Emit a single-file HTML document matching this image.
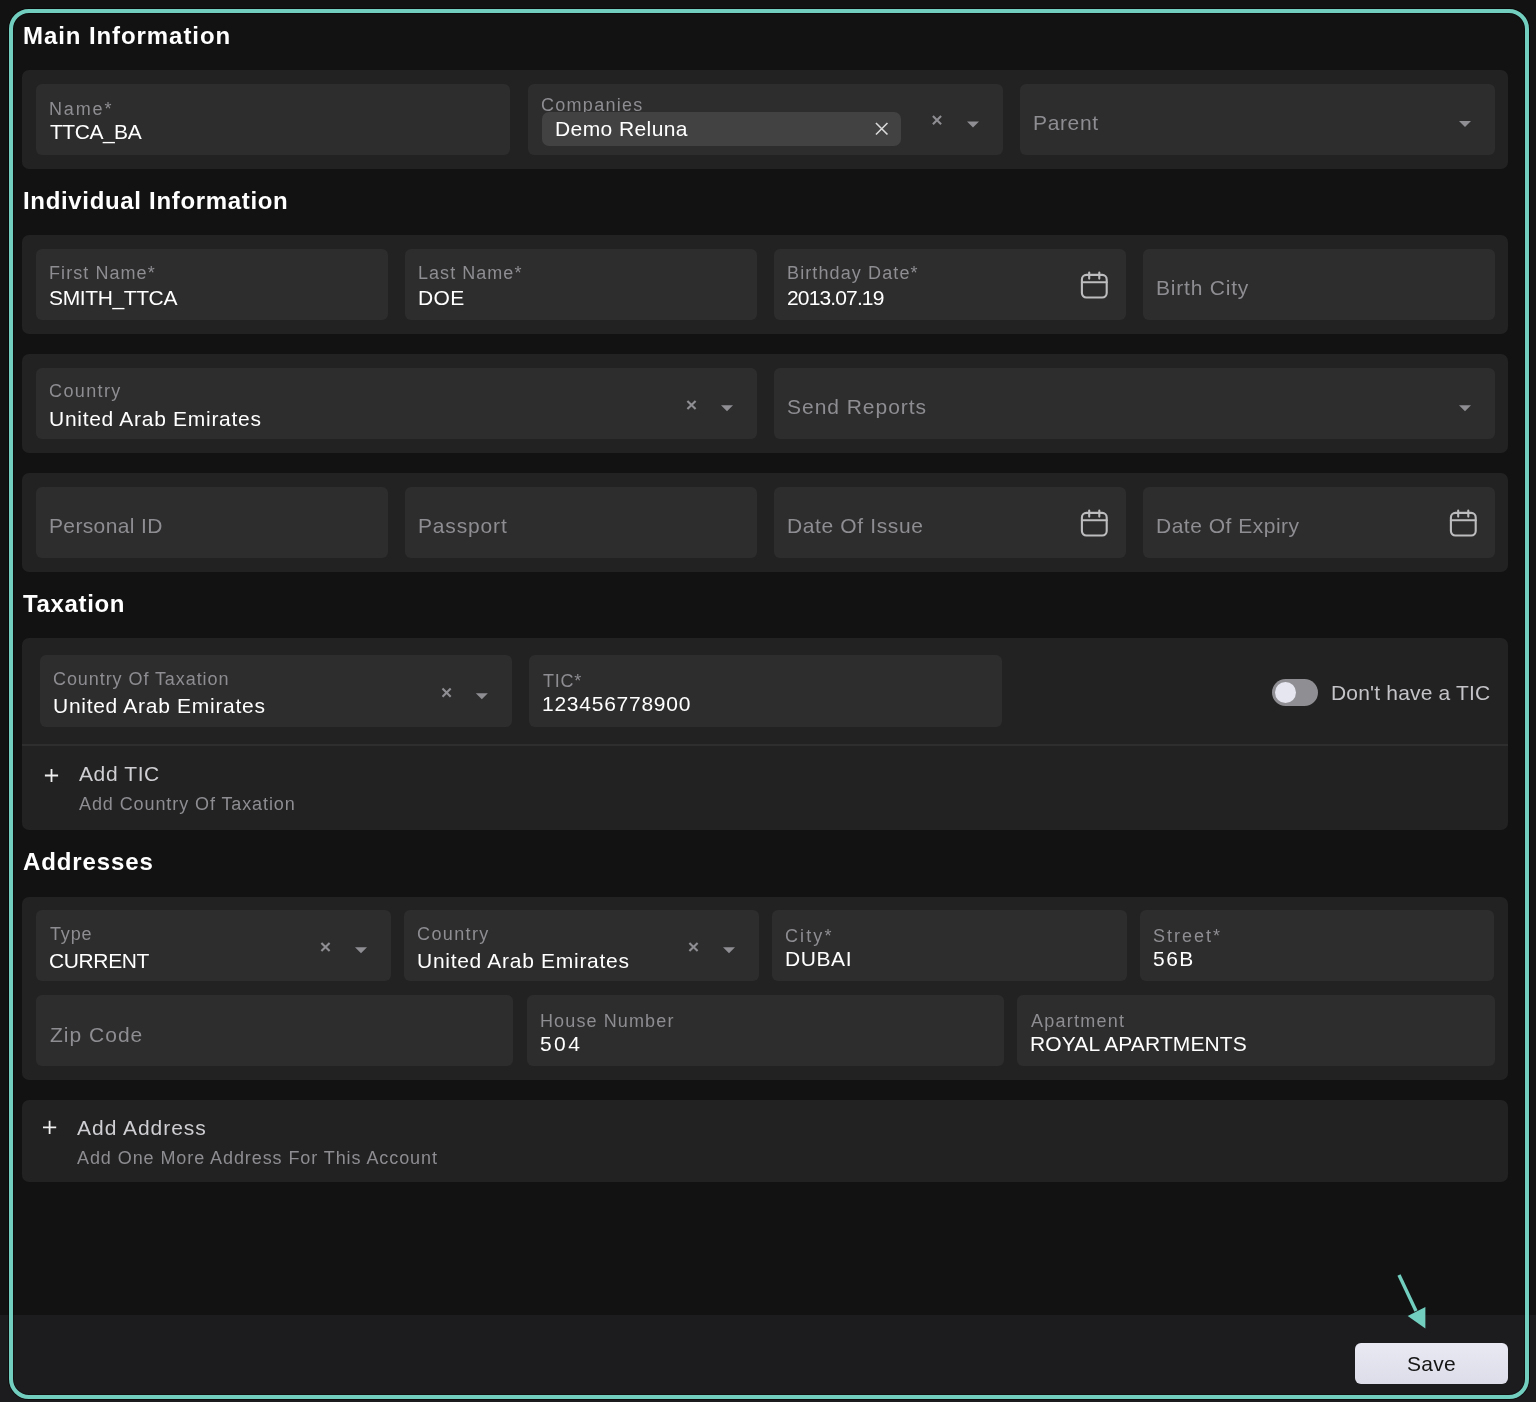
<!DOCTYPE html>
<html><head><meta charset="utf-8"><style>
html,body{margin:0;padding:0;width:1536px;height:1402px;overflow:hidden;background:#121212;}
body>div,body>svg{position:absolute;}
.t{font-family:"Liberation Sans",sans-serif;line-height:1;white-space:nowrap;will-change:transform;}
</style></head><body>
<div class="t" style="left:22.9px;top:24px;font-size:24px;color:#fff;font-weight:bold;letter-spacing:0.92px">Main Information</div>
<div style="left:22px;top:70px;width:1486px;height:99px;background:#222222;border-radius:7px;"></div>
<div style="left:36px;top:84px;width:474px;height:71px;background:#2d2d2d;border-radius:6px;"></div>
<div class="t" style="left:49.3px;top:100px;font-size:18px;color:#8d8d92;font-weight:normal;letter-spacing:1.85px">Name*</div>
<div class="t" style="left:50.3px;top:121px;font-size:21px;color:#ffffff;font-weight:normal;letter-spacing:-0.48px">TTCA_BA</div>
<div style="left:528px;top:84px;width:475px;height:71px;background:#2d2d2d;border-radius:6px;"></div>
<div class="t" style="left:541px;top:96px;font-size:18px;color:#8d8d92;font-weight:normal;letter-spacing:1.28px">Companies</div>
<div style="left:542px;top:112px;width:359px;height:34px;background:#424242;border-radius:7px;"></div>
<div class="t" style="left:555.3px;top:118px;font-size:21px;color:#ffffff;font-weight:normal;letter-spacing:0.41px">Demo Reluna</div>
<svg style="left:873px;top:120px" width="16" height="16" viewBox="873 120 16 16"><path d="M875.95 123.05000000000001L887.45 134.55M887.45 123.05000000000001L875.95 134.55" stroke="#d9d9d9" stroke-width="1.6"/></svg>
<svg style="left:929px;top:112px" width="16" height="16" viewBox="929 112 16 16"><path d="M932.9 116.10000000000001L941.1 124.3M941.1 116.10000000000001L932.9 124.3" stroke="#8e8e93" stroke-width="2.1"/></svg>
<svg style="left:965px;top:116px" width="16" height="16" viewBox="965 116 16 16"><path d="M967.0 121.5H979.0L973 127.5Z" fill="#8e8e93"/></svg>
<div style="left:1020px;top:84px;width:475px;height:71px;background:#2d2d2d;border-radius:6px;"></div>
<div class="t" style="left:1033.3px;top:112px;font-size:21px;color:#8d8d92;font-weight:normal;letter-spacing:0.64px">Parent</div>
<svg style="left:1457px;top:116px" width="16" height="16" viewBox="1457 116 16 16"><path d="M1459.0 121.0H1471.0L1465 127.0Z" fill="#8e8e93"/></svg>
<div class="t" style="left:22.9px;top:189px;font-size:24px;color:#fff;font-weight:bold;letter-spacing:0.67px">Individual Information</div>
<div style="left:22px;top:235px;width:1486px;height:99px;background:#222222;border-radius:7px;"></div>
<div style="left:36px;top:249px;width:352px;height:71px;background:#2d2d2d;border-radius:6px;"></div>
<div class="t" style="left:49.3px;top:264px;font-size:18px;color:#8d8d92;font-weight:normal;letter-spacing:1.07px">First Name*</div>
<div class="t" style="left:49.3px;top:287px;font-size:21px;color:#ffffff;font-weight:normal;letter-spacing:-0.38px">SMITH_TTCA</div>
<div style="left:405px;top:249px;width:352px;height:71px;background:#2d2d2d;border-radius:6px;"></div>
<div class="t" style="left:418.3px;top:264px;font-size:18px;color:#8d8d92;font-weight:normal;letter-spacing:1.04px">Last Name*</div>
<div class="t" style="left:418.3px;top:287px;font-size:21px;color:#ffffff;font-weight:normal;letter-spacing:0.4px">DOE</div>
<div style="left:774px;top:249px;width:352px;height:71px;background:#2d2d2d;border-radius:6px;"></div>
<div class="t" style="left:787.3px;top:264px;font-size:18px;color:#8d8d92;font-weight:normal;letter-spacing:1.12px">Birthday Date*</div>
<div class="t" style="left:787.3px;top:287px;font-size:21px;color:#ffffff;font-weight:normal;letter-spacing:-0.86px">2013.07.19</div>
<svg style="left:1079px;top:270px" width="30" height="30" viewBox="-0.5 0 30 30"><g fill="none" stroke="#bdbdbf" stroke-width="2.1" stroke-linecap="round"><rect x="2.4" y="4.9" width="24.8" height="22.6" rx="4.5"/><path d="M2.4 12.3H27.2M9.7 2.5V8.6M19.8 2.5V8.6"/></g></svg>
<div style="left:1143px;top:249px;width:352px;height:71px;background:#2d2d2d;border-radius:6px;"></div>
<div class="t" style="left:1156.3px;top:277px;font-size:21px;color:#8d8d92;font-weight:normal;letter-spacing:0.79px">Birth City</div>
<div style="left:22px;top:354px;width:1486px;height:99px;background:#222222;border-radius:7px;"></div>
<div style="left:36px;top:368px;width:721px;height:71px;background:#2d2d2d;border-radius:6px;"></div>
<div class="t" style="left:49.3px;top:382px;font-size:18px;color:#8d8d92;font-weight:normal;letter-spacing:1.38px">Country</div>
<div class="t" style="left:49.3px;top:408px;font-size:21px;color:#ffffff;font-weight:normal;letter-spacing:0.71px">United Arab Emirates</div>
<svg style="left:683px;top:397px" width="16" height="16" viewBox="683 397 16 16"><path d="M687.4 400.9L695.6 409.1M695.6 400.9L687.4 409.1" stroke="#8e8e93" stroke-width="2.1"/></svg>
<svg style="left:719px;top:400px" width="16" height="16" viewBox="719 400 16 16"><path d="M721.0 405.3H733.0L727 411.3Z" fill="#8e8e93"/></svg>
<div style="left:774px;top:368px;width:721px;height:71px;background:#2d2d2d;border-radius:6px;"></div>
<div class="t" style="left:787.3px;top:396px;font-size:21px;color:#8d8d92;font-weight:normal;letter-spacing:0.97px">Send Reports</div>
<svg style="left:1457px;top:400px" width="16" height="16" viewBox="1457 400 16 16"><path d="M1459.0 405.2H1471.0L1465 411.2Z" fill="#8e8e93"/></svg>
<div style="left:22px;top:473px;width:1486px;height:99px;background:#222222;border-radius:7px;"></div>
<div style="left:36px;top:487px;width:352px;height:71px;background:#2d2d2d;border-radius:6px;"></div>
<div class="t" style="left:49.3px;top:515px;font-size:21px;color:#8d8d92;font-weight:normal;letter-spacing:0.36px">Personal ID</div>
<div style="left:405px;top:487px;width:352px;height:71px;background:#2d2d2d;border-radius:6px;"></div>
<div class="t" style="left:418.3px;top:515px;font-size:21px;color:#8d8d92;font-weight:normal;letter-spacing:0.84px">Passport</div>
<div style="left:774px;top:487px;width:352px;height:71px;background:#2d2d2d;border-radius:6px;"></div>
<div class="t" style="left:787.3px;top:515px;font-size:21px;color:#8d8d92;font-weight:normal;letter-spacing:0.63px">Date Of Issue</div>
<svg style="left:1079px;top:508px" width="30" height="30" viewBox="-0.5 0 30 30"><g fill="none" stroke="#bdbdbf" stroke-width="2.1" stroke-linecap="round"><rect x="2.4" y="4.9" width="24.8" height="22.6" rx="4.5"/><path d="M2.4 12.3H27.2M9.7 2.5V8.6M19.8 2.5V8.6"/></g></svg>
<div style="left:1143px;top:487px;width:352px;height:71px;background:#2d2d2d;border-radius:6px;"></div>
<div class="t" style="left:1156.3px;top:515px;font-size:21px;color:#8d8d92;font-weight:normal;letter-spacing:0.5px">Date Of Expiry</div>
<svg style="left:1448px;top:508px" width="30" height="30" viewBox="-0.5 0 30 30"><g fill="none" stroke="#bdbdbf" stroke-width="2.1" stroke-linecap="round"><rect x="2.4" y="4.9" width="24.8" height="22.6" rx="4.5"/><path d="M2.4 12.3H27.2M9.7 2.5V8.6M19.8 2.5V8.6"/></g></svg>
<div class="t" style="left:23px;top:592px;font-size:24px;color:#fff;font-weight:bold;letter-spacing:0.66px">Taxation</div>
<div style="left:22px;top:638px;width:1486px;height:192px;background:#222222;border-radius:7px;"></div>
<div style="left:40px;top:655px;width:472px;height:72px;background:#2d2d2d;border-radius:6px;"></div>
<div class="t" style="left:52.75px;top:670px;font-size:18px;color:#8d8d92;font-weight:normal;letter-spacing:0.93px">Country Of Taxation</div>
<div class="t" style="left:52.75px;top:695px;font-size:21px;color:#ffffff;font-weight:normal;letter-spacing:0.71px">United Arab Emirates</div>
<svg style="left:438px;top:684px" width="16" height="16" viewBox="438 684 16 16"><path d="M442.5 688.5L450.70000000000005 696.7M450.70000000000005 688.5L442.5 696.7" stroke="#8e8e93" stroke-width="2.1"/></svg>
<svg style="left:473px;top:688px" width="16" height="16" viewBox="473 688 16 16"><path d="M475.8 693.2H487.8L481.8 699.2Z" fill="#8e8e93"/></svg>
<div style="left:529px;top:655px;width:473px;height:72px;background:#2d2d2d;border-radius:6px;"></div>
<div class="t" style="left:543px;top:672px;font-size:18px;color:#8d8d92;font-weight:normal;letter-spacing:0.73px">TIC*</div>
<div class="t" style="left:542px;top:693px;font-size:21px;color:#ffffff;font-weight:normal;letter-spacing:0.75px">123456778900</div>
<div style="left:1272px;top:679px;width:46px;height:27px;background:#8e8e93;border-radius:14px;"></div>
<div style="left:1275px;top:682px;width:21px;height:21px;border-radius:50%;background:#e5e6f0"></div>
<div class="t" style="left:1331px;top:682px;font-size:21px;color:#c4c4c8;font-weight:normal;letter-spacing:0.18px">Don&#39;t have a TIC</div>
<div style="left:22px;top:744px;width:1486px;height:2px;background:#2e2e2e;border-radius:0px;"></div>
<svg style="left:42px;top:766px" width="18" height="18" viewBox="42 766 18 18"><path d="M44.9 775.5H58.1M51.5 768.9V782.1" stroke="#f0f0f0" stroke-width="1.8"/></svg>
<div class="t" style="left:79.3px;top:763px;font-size:21px;color:#cfcfd3;font-weight:normal;letter-spacing:0.6px">Add TIC</div>
<div class="t" style="left:79.3px;top:795px;font-size:18px;color:#8d8d92;font-weight:normal;letter-spacing:0.91px">Add Country Of Taxation</div>
<div class="t" style="left:23px;top:850px;font-size:24px;color:#fff;font-weight:bold;letter-spacing:0.9px">Addresses</div>
<div style="left:22px;top:897px;width:1486px;height:183px;background:#222222;border-radius:7px;"></div>
<div style="left:36px;top:910px;width:355px;height:71px;background:#2d2d2d;border-radius:6px;"></div>
<div class="t" style="left:50.2px;top:925px;font-size:18px;color:#8d8d92;font-weight:normal;letter-spacing:0.87px">Type</div>
<div class="t" style="left:49.2px;top:950px;font-size:21px;color:#ffffff;font-weight:normal;letter-spacing:-0.38px">CURRENT</div>
<svg style="left:317px;top:939px" width="16" height="16" viewBox="317 939 16 16"><path d="M321.4 942.9L329.6 951.1M329.6 942.9L321.4 951.1" stroke="#8e8e93" stroke-width="2.1"/></svg>
<svg style="left:353px;top:942px" width="16" height="16" viewBox="353 942 16 16"><path d="M355.0 947.3H367.0L361 953.3Z" fill="#8e8e93"/></svg>
<div style="left:404px;top:910px;width:355px;height:71px;background:#2d2d2d;border-radius:6px;"></div>
<div class="t" style="left:417.3px;top:925px;font-size:18px;color:#8d8d92;font-weight:normal;letter-spacing:1.38px">Country</div>
<div class="t" style="left:417.3px;top:950px;font-size:21px;color:#ffffff;font-weight:normal;letter-spacing:0.71px">United Arab Emirates</div>
<svg style="left:685px;top:939px" width="16" height="16" viewBox="685 939 16 16"><path d="M689.4 942.9L697.6 951.1M697.6 942.9L689.4 951.1" stroke="#8e8e93" stroke-width="2.1"/></svg>
<svg style="left:721px;top:942px" width="16" height="16" viewBox="721 942 16 16"><path d="M723.0 947.3H735.0L729 953.3Z" fill="#8e8e93"/></svg>
<div style="left:772px;top:910px;width:355px;height:71px;background:#2d2d2d;border-radius:6px;"></div>
<div class="t" style="left:785.3px;top:927px;font-size:18px;color:#8d8d92;font-weight:normal;letter-spacing:2.1px">City*</div>
<div class="t" style="left:785.3px;top:948px;font-size:21px;color:#ffffff;font-weight:normal;letter-spacing:0.58px">DUBAI</div>
<div style="left:1140px;top:910px;width:354px;height:71px;background:#2d2d2d;border-radius:6px;"></div>
<div class="t" style="left:1153.3px;top:927px;font-size:18px;color:#8d8d92;font-weight:normal;letter-spacing:2.0px">Street*</div>
<div class="t" style="left:1153.3px;top:948px;font-size:21px;color:#ffffff;font-weight:normal;letter-spacing:1.45px">56B</div>
<div style="left:36px;top:995px;width:477px;height:71px;background:#2d2d2d;border-radius:6px;"></div>
<div class="t" style="left:50.3px;top:1024px;font-size:21px;color:#8d8d92;font-weight:normal;letter-spacing:1.01px">Zip Code</div>
<div style="left:527px;top:995px;width:477px;height:71px;background:#2d2d2d;border-radius:6px;"></div>
<div class="t" style="left:540.3px;top:1012px;font-size:18px;color:#8d8d92;font-weight:normal;letter-spacing:1.12px">House Number</div>
<div class="t" style="left:540.3px;top:1033px;font-size:21px;color:#ffffff;font-weight:normal;letter-spacing:2.4px">504</div>
<div style="left:1017px;top:995px;width:478px;height:71px;background:#2d2d2d;border-radius:6px;"></div>
<div class="t" style="left:1031.3px;top:1012px;font-size:18px;color:#8d8d92;font-weight:normal;letter-spacing:1.26px">Apartment</div>
<div class="t" style="left:1030.3px;top:1033px;font-size:21px;color:#ffffff;font-weight:normal;letter-spacing:0.11px">ROYAL APARTMENTS</div>
<div style="left:22px;top:1100px;width:1486px;height:82px;background:#222222;border-radius:7px;"></div>
<svg style="left:40px;top:1118px" width="18" height="18" viewBox="40 1118 18 18"><path d="M43.0 1127.4H56.2M49.6 1120.8000000000002V1134.0" stroke="#f0f0f0" stroke-width="1.8"/></svg>
<div class="t" style="left:77.3px;top:1117px;font-size:21px;color:#cfcfd3;font-weight:normal;letter-spacing:0.97px">Add Address</div>
<div class="t" style="left:77.3px;top:1149px;font-size:18px;color:#8d8d92;font-weight:normal;letter-spacing:0.92px">Add One More Address For This Account</div>
<div style="left:0px;top:1315px;width:1536px;height:87px;background:#1c1c1e;border-radius:0px;"></div>
<div style="left:1355px;top:1343px;width:153px;height:41px;border-radius:6px;background:linear-gradient(180deg,#e8e9f3,#dcdde8)"></div>
<div class="t" style="left:1407.3px;top:1353px;font-size:21px;color:#151515;font-weight:normal;letter-spacing:0.3px">Save</div>
<svg style="left:1390px;top:1270px" width="45" height="65" viewBox="1390 1270 45 65"><path d="M1399 1275L1416 1311" stroke="#72cfc0" stroke-width="3.4"/><path d="M1407.7 1316L1425.4 1307L1425.4 1328.5Z" fill="#72cfc0"/></svg>
<div style="left:9px;top:9px;width:1512px;height:1382px;border:4px solid #72cfc0;border-radius:20px;box-shadow:0 0 0 1px rgba(0,0,0,0.5), inset 0 0 0 1px rgba(0,0,0,0.35)"></div>
</body></html>
